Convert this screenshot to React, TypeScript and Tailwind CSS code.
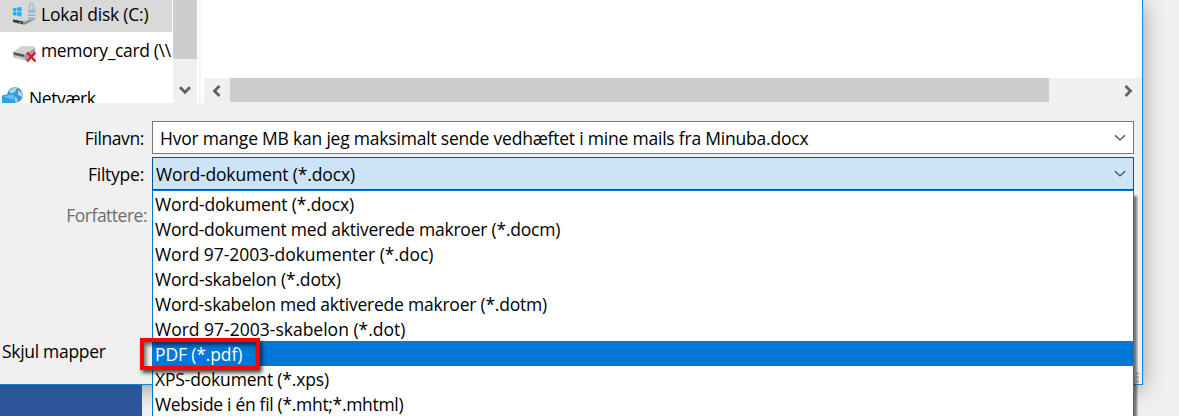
import React from "react";

const fileTypes = [
  { label: "Word-dokument (*.docx)", cls: "tracking-[-0.15px]" },
  { label: "Word-dokument med aktiverede makroer (*.docm)", cls: "tracking-[-0.22px]" },
  { label: "Word 97-2003-dokumenter (*.doc)", cls: "tracking-[-0.06px]" },
  { label: "Word-skabelon (*.dotx)", cls: "tracking-[-0.16px]" },
  { label: "Word-skabelon med aktiverede makroer (*.dotm)", cls: "tracking-[-0.23px]" },
  { label: "Word 97-2003-skabelon (*.dot)", cls: "tracking-[0px]" },
  { label: "PDF (*.pdf)", cls: "tracking-[-0.13px]" },
  { label: "XPS-dokument (*.xps)", cls: "tracking-[-0.17px]" },
  { label: "Webside i én fil (*.mht;*.mhtml)", cls: "tracking-[-0.31px]" },
];

function Chevron({ d, className }: { d: string; className: string }) {
  return (
    <svg viewBox="0 0 12 12" className={className} fill="none" stroke="#606060" strokeWidth="2.8">
      <path d={d} />
    </svg>
  );
}

function ThinChevron() {
  return (
    <svg viewBox="0 0 12 8" className="h-2 w-3 shrink-0" fill="none" stroke="#444" strokeWidth="1.2">
      <path d="M1 1.2 6 6 11 1.2" />
    </svg>
  );
}

function DiskIcon() {
  return (
    <svg viewBox="0 0 24 24" className="h-6 w-6 shrink-0">
      <path d="M1 17.500 7 13.500h12l4 2-9 5-12-1.500z" fill="#d4d7d9" />
      <path d="m1 17.500 12 2 9.500-4.500v2.500L13 22.800 1 20z" fill="#8b9093" />
      <path d="m1 17.500 10 2v3L1 20z" fill="#34393b" />
      <path d="M7 20.300l2.200.5" stroke="#5fd13a" strokeWidth="1.300" />
      <path d="M1 6.200 4.500 5.600v3.600H1zM5.300 5.500 9.500 5v4.200H5.300zM1 10h3.500v3.800L1 13.300zM5.300 10h4.200v4.600l-4.200-.7z" fill="#18b4ea" />
      <path d="M17.500 9V4q0-2.800 2-2.800t2 2.800V9" fill="none" stroke="#b4bdc2" strokeWidth="1.600" />
      <path d="M16 8.500l7.500-1v8.500l-4 2.500-3.500-2z" fill="#a3b8c6" />
      <path d="M16 11.500h7.500M16 14.500h7.500" stroke="#dbe7ee" strokeWidth=".9" />
    </svg>
  );
}

function CardIcon() {
  return (
    <svg viewBox="0 0 24 18" className="h-[18px] w-6 shrink-0">
      <path d="M1 7 9 1h13l1 2-9 7z" fill="#d3d3d3" />
      <path d="M1 7l12 2.500L23 3v5l-9 7.500-12-3z" fill="#9b9b9b" />
      <path d="M1.500 7.300 12 9.800v2L2 9.500z" fill="#4d4d4d" />
      <path d="M3 10.500l10 2.700v2.300L3 13z" fill="#d0d0d0" />
      <path d="m15 7.500 8.500 9M23.500 7.500 15 16.500" stroke="#e10f24" strokeWidth="2.300" />
    </svg>
  );
}

function NetworkIcon() {
  return (
    <svg viewBox="0 0 22 18" className="h-[18px] w-[22px] shrink-0">
      <circle cx="14" cy="8" r="7.800" fill="#4794bd" />
      <path d="M8 4q4-4 8-3l-2 4-4 2zM17 3l4 3v4l-4-2zM10 9l5 1 2 4-3 2z" fill="#a9d9ed" />
      <path d="M1 8.500 13.500 5.500l1 11L2 18H1z" fill="#2f9fe8" />
      <path d="M2 9.500 12.500 7l.8 6z" fill="#62c2fa" />
    </svg>
  );
}

function Sidebar() {
  return (
    <div className="flex h-[103px] w-[201px] shrink-0 bg-white">
      <div className="flex w-[172px] flex-col overflow-hidden whitespace-nowrap">
        <div className="flex h-8 shrink-0 items-center bg-[#d9d9d9] pl-3">
          <div className="-mt-1"><DiskIcon /></div>
          <span className="ml-[5px] -mt-1 tracking-[-0.22px]">Lokal disk (C:)</span>
        </div>
        <div className="mt-1 flex h-8 shrink-0 items-center pl-3">
          <div className="mt-[3px]"><CardIcon /></div>
          <span className="ml-[5px] -mt-1 tracking-[-0.34px]">memory_card (\\</span>
        </div>
        <div className="mt-[17px] flex h-8 shrink-0 items-start pl-[1px]">
          <div className="mt-[2px]"><NetworkIcon /></div>
          <span className="ml-[6px] mt-[1px] leading-6 tracking-[-0.4px]">Netværk</span>
        </div>
      </div>
      <div className="ml-px flex w-6 flex-col items-center bg-[#f0f0f0]">
        <div className="h-[59px] w-full bg-[#cdcdcd]" />
        <Chevron d="M1 3.200 6 8.200 11 3.200" className="mt-[25px] h-3 w-3" />
      </div>
      <div className="ml-[2px] w-[2px] bg-[#f5f5f5]" />
    </div>
  );
}

function FileList() {
  return (
    <div className="flex h-[103px] flex-1 flex-col bg-white pl-[3px]">
      <div className="h-[78px]" />
      <div className="flex h-[25px] items-center bg-[#f0f0f0]">
        <div className="flex w-[26px] justify-center pr-px">
          <Chevron d="M8.500 1 3.500 6l5 5" className="h-3 w-3" />
        </div>
        <div className="h-6 w-[819px] self-start bg-[#cdcdcd]" />
        <div className="flex flex-1 justify-end pr-2">
          <Chevron d="M3.500 1l5 5-5 5" className="h-3 w-3" />
        </div>
      </div>
    </div>
  );
}

function FileTypeMenu() {
  return (
    <div className="absolute left-[152px] top-[190px] h-[240px] w-[982px] border border-[#0078d7] bg-white shadow-[3px_6px_2px_0px_rgba(0,0,0,0.5)]">
      {fileTypes.map((type) => (
        <div
          key={type.label}
          className={
            type.label.startsWith("PDF")
              ? "flex h-[25px] items-center whitespace-nowrap bg-[#0078d7] pl-[2px] text-white"
              : "flex h-[25px] items-center whitespace-nowrap pl-[2px]"
          }
        >
          <span className={type.cls}>{type.label}</span>
        </div>
      ))}
      <div className="absolute -left-[13px] top-[147px] h-8 w-[120px] border-4 border-[#fb0007] shadow-[2px_3px_4px_rgba(0,0,0,0.7),inset_2px_3px_4px_rgba(0,0,0,0.6)]" />
    </div>
  );
}

export default function App() {
  return (
    <div className="relative h-[416px] w-[1179px] overflow-hidden bg-[#f0f0f0] font-['Open_Sans','Noto_Sans',sans-serif] text-[17.5px] leading-6 text-black">
      <div className="relative flex h-[385px] w-[1143px] flex-col border-b border-r border-[#1883d7] bg-[#f0f0f0] shadow-[0_4px_20px_rgba(0,0,0,0.36)]">
        <div className="flex h-[103px]">
          <Sidebar />
          <FileList />
        </div>
        <div className="mt-[18px] flex h-[33px] items-center">
          <span className="w-[152px] pr-2 text-right tracking-[-0.4px]">Filnavn:</span>
          <div className="flex h-[33px] w-[982px] items-center justify-between border border-[#7a7a7a] bg-white pl-[7px] pr-[7px]">
            <span className="tracking-[-0.21px]">Hvor mange MB kan jeg maksimalt sende vedhæftet i mine mails fra Minuba.docx</span>
            <ThinChevron />
          </div>
        </div>
        <div className="mt-[3px] flex h-[33px] items-center">
          <span className="w-[152px] pr-2 text-right tracking-[-0.25px]">Filtype:</span>
          <div className="flex h-[33px] w-[982px] items-center justify-between border border-[#00549a] bg-[#cce4f7] pl-[3px] pr-[7px]">
            <span className="pt-px tracking-[-0.15px]">Word-dokument (*.docx)</span>
            <ThinChevron />
          </div>
        </div>
        <span className="mt-[13px] w-[147px] text-right tracking-[-0.5px] text-[#6d6d6d]">Forfattere:</span>
        <span className="mt-[112px] pl-[2px] tracking-[-0.3px]">Skjul mapper</span>
        <svg viewBox="0 0 12 12" className="absolute bottom-[1px] right-[3px] h-3 w-3" fill="#bfbfbf">
          <path d="M9 1h3v3H9zM9 5h3v3H9zM9 9h3v3H9zM5 5h3v3H5zM5 9h3v3H5zM1 9h3v3H1z" />
        </svg>
      </div>
      <div className="relative h-[31px] w-[142px] bg-[#2b579a]" />
      <FileTypeMenu />
    </div>
  );
}
